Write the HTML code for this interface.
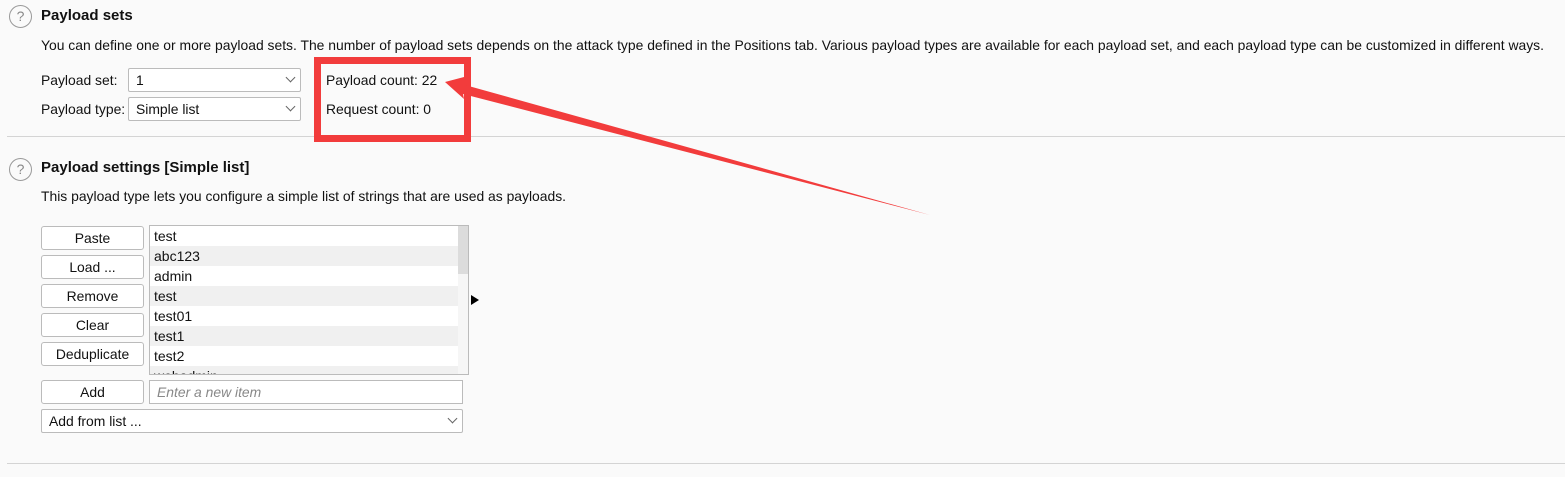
<!DOCTYPE html>
<html><head><meta charset="utf-8"><style>
*{margin:0;padding:0;box-sizing:border-box}
body{width:1565px;height:477px;background:#fafafa;font-family:"Liberation Sans",sans-serif;font-size:13.9px;color:#111;position:relative;overflow:hidden}
.a{position:absolute;white-space:nowrap}
.h{font-weight:bold;font-size:15px}
.q{position:absolute;width:23px;height:23px;border:1.5px solid #999;border-radius:50%;color:#888;font-size:14px;text-align:center;line-height:20px}
.sel{position:absolute;background:#fff;border:1px solid #bbb;border-radius:2px;height:24px;padding:3px 7px}
.chev{position:absolute;right:6px;top:5px;width:7px;height:7px;border-right:1px solid #666;border-bottom:1px solid #666;transform:rotate(45deg)}
.btn{position:absolute;left:41px;width:103px;height:24px;border:1px solid #bbb;border-radius:3px;background:#fff;text-align:center;line-height:22px}
.hr{position:absolute;left:7px;right:0;height:1px;background:#d4d4d4}
.it{height:20px;line-height:20px;padding-left:4px;font-size:14px}
.g{background:#f0f0f0}
</style></head><body>
<div class="q" style="left:9px;top:5px">?</div>
<div class="a h" style="left:41px;top:7px">Payload sets</div>
<div class="a" style="left:41px;top:37px">You can define one or more payload sets. The number of payload sets depends on the attack type defined in the Positions tab. Various payload types are available for each payload set, and each payload type can be customized in different ways.</div>
<div class="a" style="left:41px;top:72px">Payload set:</div>
<div class="sel" style="left:128px;top:68px;width:173px">1<span class="chev"></span></div>
<div class="a" style="left:41px;top:101px">Payload type:</div>
<div class="sel" style="left:128px;top:97px;width:173px">Simple list<span class="chev"></span></div>
<div class="a" style="left:326px;top:72px">Payload count: 22</div>
<div class="a" style="left:326px;top:101px">Request count: 0</div>
<div class="hr" style="top:136px"></div>
<div class="q" style="left:9px;top:158px">?</div>
<div class="a h" style="left:41px;top:159px">Payload settings [Simple list]</div>
<div class="a" style="left:41px;top:188px">This payload type lets you configure a simple list of strings that are used as payloads.</div>
<div class="btn" style="top:226px">Paste</div>
<div class="btn" style="top:255px">Load ...</div>
<div class="btn" style="top:284px">Remove</div>
<div class="btn" style="top:313px">Clear</div>
<div class="btn" style="top:342px">Deduplicate</div>
<div class="a" style="left:149px;top:225px;width:320px;height:150px;border:1px solid #bbb;background:#fff;overflow:hidden">
<div style="position:absolute;right:0;top:0;width:10px;height:148px;background:#f6f6f6"></div>
<div style="position:absolute;right:0;top:0;width:10px;height:48px;background:#dcdcdc"></div>
<div style="width:308px">
<div class="it">test</div><div class="it g">abc123</div><div class="it">admin</div><div class="it g">test</div><div class="it">test01</div><div class="it g">test1</div><div class="it">test2</div><div class="it g">webadmin</div></div></div>
<div class="a" style="left:471px;top:295px;width:0;height:0;border-left:8px solid #000;border-top:5px solid transparent;border-bottom:5px solid transparent"></div>
<div class="btn" style="top:380px">Add</div>
<div class="a" style="left:149px;top:380px;width:314px;height:24px;border:1px solid #bbb;background:#fff;padding:3px 7px;color:#888;font-style:italic">Enter a new item</div>
<div class="sel" style="left:41px;top:409px;width:422px">Add from list ...<span class="chev"></span></div>
<div class="hr" style="top:463px"></div>
<div class="a" style="left:314px;top:57px;width:157px;height:85px;border:7px solid #f23c3c"></div>
<svg class="a" style="left:0;top:0" width="1565" height="477"><polygon points="445,82 464,77 465,85 930,215 463,94 464,99" fill="#f23c3c"/></svg>
</body></html>
